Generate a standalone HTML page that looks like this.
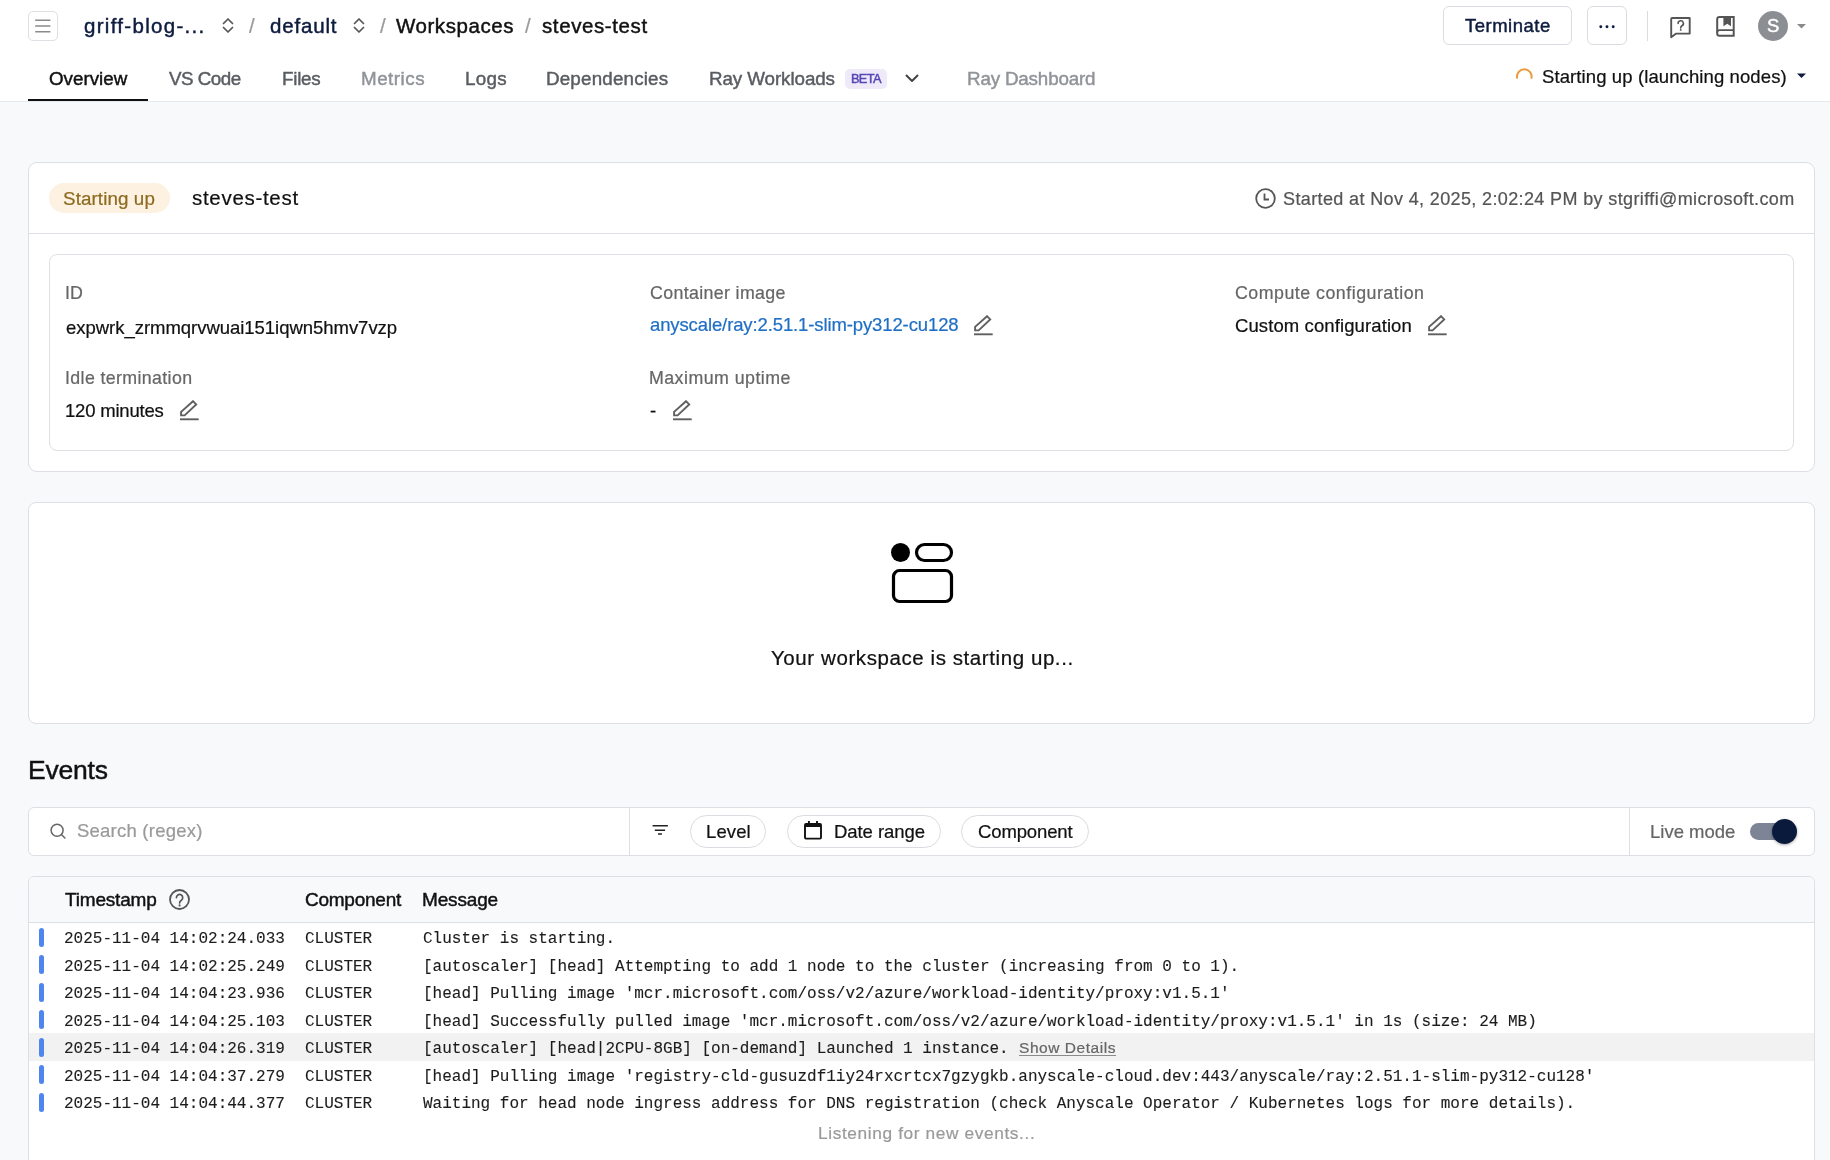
<!DOCTYPE html>
<html><head><meta charset="utf-8"><style>
html,body{margin:0;padding:0;}
body{width:1830px;height:1160px;position:relative;overflow:hidden;background:#f8f9fb;font-family:"Liberation Sans",sans-serif;}
.t{position:absolute;white-space:pre;will-change:transform;}
.r{position:absolute;}
</style></head><body>
<div class="r" style="left:0px;top:0px;width:1830px;height:101px;background:#fff"></div>
<div class="r" style="left:0px;top:101px;width:1830px;height:1px;background:#e6e8ec"></div>
<div class="r" style="left:28px;top:11px;width:30px;height:30px;border:1px solid #dcdfe3;border-radius:5px;box-sizing:border-box;background:#fff"></div>
<svg class="r" style="left:34px;top:18px;" width="18" height="16" viewBox="0 0 18 16"><path d="M1.2 2.2h15.2M1.2 8h15.2M1.2 13.8h15.2" stroke="#8a8a8a" stroke-width="1.6"/></svg>
<div class="t" style="left:84px;top:13.50px;font-size:20.5px;line-height:23px;color:#0d1b3e;font-weight:400;-webkit-text-stroke:0.45px #0d1b3e;letter-spacing:1.308px;font-family:'Liberation Sans', sans-serif;">griff-blog-...</div>
<svg class="r" style="left:220px;top:17px;" width="16" height="17" viewBox="0 0 16 17"><path d="M3.5 6.5 8 2l4.5 4.5M3.5 10.5 8 15l4.5-4.5" fill="none" stroke="#555" stroke-width="1.7" stroke-linecap="round" stroke-linejoin="round"/></svg>
<div class="t" style="left:249px;top:13.50px;font-size:20.5px;line-height:23px;color:#999;font-weight:400;-webkit-text-stroke:0.22px #999;letter-spacing:0.000px;font-family:'Liberation Sans', sans-serif;">/</div>
<div class="t" style="left:270px;top:13.50px;font-size:20.5px;line-height:23px;color:#0d1b3e;font-weight:400;-webkit-text-stroke:0.45px #0d1b3e;letter-spacing:0.833px;font-family:'Liberation Sans', sans-serif;">default</div>
<svg class="r" style="left:351px;top:17px;" width="16" height="17" viewBox="0 0 16 17"><path d="M3.5 6.5 8 2l4.5 4.5M3.5 10.5 8 15l4.5-4.5" fill="none" stroke="#555" stroke-width="1.7" stroke-linecap="round" stroke-linejoin="round"/></svg>
<div class="t" style="left:380px;top:13.50px;font-size:20.5px;line-height:23px;color:#999;font-weight:400;-webkit-text-stroke:0.22px #999;letter-spacing:0.000px;font-family:'Liberation Sans', sans-serif;">/</div>
<div class="t" style="left:396.0px;top:13.50px;font-size:20.5px;line-height:23px;color:#111;font-weight:400;-webkit-text-stroke:0.45px #111;letter-spacing:0.556px;font-family:'Liberation Sans', sans-serif;">Workspaces</div>
<div class="t" style="left:525px;top:13.50px;font-size:20.5px;line-height:23px;color:#999;font-weight:400;-webkit-text-stroke:0.22px #999;letter-spacing:0.000px;font-family:'Liberation Sans', sans-serif;">/</div>
<div class="t" style="left:542px;top:13.50px;font-size:20.5px;line-height:23px;color:#111;font-weight:400;-webkit-text-stroke:0.45px #111;letter-spacing:0.600px;font-family:'Liberation Sans', sans-serif;">steves-test</div>
<div class="r" style="left:1443px;top:6px;width:129px;height:39px;border:1px solid #d9dce1;border-radius:6px;box-sizing:border-box;background:#fff"></div>
<div class="t" style="left:1465px;top:15.00px;font-size:18.5px;line-height:21px;color:#0d1b3e;font-weight:400;-webkit-text-stroke:0.45px #0d1b3e;letter-spacing:0.500px;font-family:'Liberation Sans', sans-serif;">Terminate</div>
<div class="r" style="left:1587px;top:6px;width:40px;height:39px;border:1px solid #d9dce1;border-radius:6px;box-sizing:border-box;background:#fff"></div>
<svg class="r" style="left:1597px;top:22px;" width="20" height="8" viewBox="0 0 20 8"><circle cx="3.8" cy="4.8" r="1.45" fill="#0d1b3e"/><circle cx="10" cy="4.8" r="1.45" fill="#0d1b3e"/><circle cx="16.2" cy="4.8" r="1.45" fill="#0d1b3e"/></svg>
<div class="r" style="left:1647px;top:11px;width:1px;height:30px;background:#d9dce1"></div>
<svg class="r" style="left:1668px;top:15px;" width="25" height="24" viewBox="0 0 25 24"><path d="M4.2 3H21.7V18.6H8.2L3.2 22.2V4Q3.2 3 4.2 3Z" fill="none" stroke="#555" stroke-width="1.9" stroke-linejoin="round"/><path d="M10.1 8.4A2.65 2.65 0 1 1 13.9 10.8C13.1 11.3 12.7 11.8 12.7 13" fill="none" stroke="#555" stroke-width="1.6" stroke-linecap="round"/><circle cx="12.7" cy="14.9" r="0.95" fill="#555"/></svg>
<svg class="r" style="left:1714px;top:14px;" width="24" height="24" viewBox="0 0 24 24"><path d="M5.5 3H19.7V21.7H5.5A2.3 2.3 0 0 1 3.2 19.4V5.3A2.3 2.3 0 0 1 5.5 3Z" fill="none" stroke="#555" stroke-width="2"/><path d="M3.2 18.6A2.3 2.3 0 0 1 5.5 16.2H19.7" fill="none" stroke="#555" stroke-width="1.8"/><path d="M9.4 3H17V12.2L13.2 9.8L9.4 12.2Z" fill="#555"/></svg>
<div class="r" style="left:1758px;top:11px;width:30px;height:30px;background:#8b8f93;border-radius:50%"></div>
<div class="t" style="left:1767.3999999999992px;top:15.00px;font-size:18.5px;line-height:21px;color:#fff;font-weight:400;-webkit-text-stroke:0.45px #fff;letter-spacing:0.000px;font-family:'Liberation Sans', sans-serif;">S</div>
<svg class="r" style="left:1796px;top:23px;" width="11" height="7" viewBox="0 0 11 7"><path d="M1 1h9L5.5 5.5z" fill="#8a8a8a"/></svg>
<div class="t" style="left:48.999999999999915px;top:68.00px;font-size:18.8px;line-height:21px;color:#111;font-weight:400;-webkit-text-stroke:0.45px #111;letter-spacing:0.000px;font-family:'Liberation Sans', sans-serif;">Overview</div>
<div class="r" style="left:28px;top:99px;width:120px;height:2px;background:#111"></div>
<div class="t" style="left:169px;top:68.00px;font-size:18.8px;line-height:21px;color:#595c61;font-weight:400;-webkit-text-stroke:0.45px #595c61;letter-spacing:-0.500px;font-family:'Liberation Sans', sans-serif;">VS Code</div>
<div class="t" style="left:282px;top:68.00px;font-size:18.8px;line-height:21px;color:#595c61;font-weight:400;-webkit-text-stroke:0.45px #595c61;letter-spacing:-0.250px;font-family:'Liberation Sans', sans-serif;">Files</div>
<div class="t" style="left:361px;top:68.00px;font-size:18.8px;line-height:21px;color:#909398;font-weight:400;-webkit-text-stroke:0.45px #909398;letter-spacing:0.500px;font-family:'Liberation Sans', sans-serif;">Metrics</div>
<div class="t" style="left:465px;top:68.00px;font-size:18.8px;line-height:21px;color:#595c61;font-weight:400;-webkit-text-stroke:0.45px #595c61;letter-spacing:0.333px;font-family:'Liberation Sans', sans-serif;">Logs</div>
<div class="t" style="left:546px;top:68.00px;font-size:18.8px;line-height:21px;color:#595c61;font-weight:400;-webkit-text-stroke:0.45px #595c61;letter-spacing:0.182px;font-family:'Liberation Sans', sans-serif;">Dependencies</div>
<div class="t" style="left:708.9999999999986px;top:68.00px;font-size:18.8px;line-height:21px;color:#595c61;font-weight:400;-webkit-text-stroke:0.45px #595c61;letter-spacing:-0.083px;font-family:'Liberation Sans', sans-serif;">Ray Workloads</div>
<div class="r" style="left:845px;top:69px;width:42px;height:20px;background:#eeeafa;border-radius:5px"></div>
<div class="t" style="left:851px;top:71.00px;font-size:12.8px;line-height:15px;color:#5646b5;font-weight:400;-webkit-text-stroke:0.45px #5646b5;letter-spacing:-0.667px;font-family:'Liberation Sans', sans-serif;">BETA</div>
<svg class="r" style="left:903px;top:72px;" width="18" height="12" viewBox="0 0 18 12"><path d="M3.5 3.5l5.5 5.5 5.5-5.5" fill="none" stroke="#444" stroke-width="2" stroke-linecap="round" stroke-linejoin="round"/></svg>
<div class="t" style="left:966.9999999999993px;top:68.00px;font-size:18.8px;line-height:21px;color:#909398;font-weight:400;-webkit-text-stroke:0.45px #909398;letter-spacing:-0.167px;font-family:'Liberation Sans', sans-serif;">Ray Dashboard</div>
<svg class="r" style="left:1514px;top:66px;" width="20" height="16" viewBox="0 0 20 16"><path d="M3.1 11.8A7.3 7.3 0 1 1 17.5 11.8" fill="none" stroke="#e99b3f" stroke-width="2" stroke-linecap="round"/></svg>
<div class="t" style="left:1542px;top:66.00px;font-size:18.5px;line-height:21px;color:#111;font-weight:400;-webkit-text-stroke:0.22px #111;letter-spacing:0.107px;font-family:'Liberation Sans', sans-serif;">Starting up (launching nodes)</div>
<svg class="r" style="left:1796px;top:72px;" width="11" height="7" viewBox="0 0 11 7"><path d="M1 1.5h9L5.5 6z" fill="#0d1b3e"/></svg>
<div class="r" style="left:0px;top:102px;width:1830px;height:1058px;background:#f8f9fb"></div>
<div class="r" style="left:28px;top:162px;width:1787px;height:310px;background:#fff;border:1px solid #dddfe4;border-radius:9px;box-sizing:border-box"></div>
<div class="r" style="left:29px;top:233px;width:1785px;height:1px;background:#dddfe4"></div>
<div class="r" style="left:49px;top:183px;width:121px;height:30px;background:#fdf1e1;border-radius:15px"></div>
<div class="t" style="left:63.0px;top:188.00px;font-size:18.8px;line-height:21px;color:#8d6a1f;font-weight:400;-webkit-text-stroke:0.22px #8d6a1f;letter-spacing:0.100px;font-family:'Liberation Sans', sans-serif;">Starting up</div>
<div class="t" style="left:192.00000000000034px;top:186.00px;font-size:20.5px;line-height:23px;color:#111;font-weight:400;-webkit-text-stroke:0.22px #111;letter-spacing:0.700px;font-family:'Liberation Sans', sans-serif;">steves-test</div>
<svg class="r" style="left:1254px;top:187px;" width="23" height="23" viewBox="0 0 23 23"><circle cx="11.5" cy="11.5" r="9.3" fill="none" stroke="#555" stroke-width="1.8"/><path d="M10.5 6.5v6h4.5" fill="none" stroke="#555" stroke-width="1.8"/></svg>
<div class="t" style="left:1282.9999999999986px;top:189.00px;font-size:18px;line-height:20px;color:#555;font-weight:400;-webkit-text-stroke:0.22px #555;letter-spacing:0.373px;font-family:'Liberation Sans', sans-serif;">Started at Nov 4, 2025, 2:02:24 PM by stgriffi@microsoft.com</div>
<div class="r" style="left:49px;top:254px;width:1745px;height:197px;background:#fff;border:1px solid #dddfe4;border-radius:8px;box-sizing:border-box"></div>
<div class="t" style="left:65.19999999999993px;top:283.00px;font-size:17.8px;line-height:20px;color:#666;font-weight:400;-webkit-text-stroke:0.22px #666;letter-spacing:0.000px;font-family:'Liberation Sans', sans-serif;">ID</div>
<div class="t" style="left:65.99999999999991px;top:316.80px;font-size:18.5px;line-height:21px;color:#111;font-weight:400;-webkit-text-stroke:0.22px #111;letter-spacing:-0.031px;font-family:'Liberation Sans', sans-serif;">expwrk_zrmmqrvwuai151iqwn5hmv7vzp</div>
<div class="t" style="left:649.9999999999986px;top:282.60px;font-size:17.8px;line-height:20px;color:#666;font-weight:400;-webkit-text-stroke:0.22px #666;letter-spacing:0.357px;font-family:'Liberation Sans', sans-serif;">Container image</div>
<div class="t" style="left:649.9999999999986px;top:314.00px;font-size:18.5px;line-height:21px;color:#1f6fc5;font-weight:400;-webkit-text-stroke:0.22px #1f6fc5;letter-spacing:-0.114px;font-family:'Liberation Sans', sans-serif;">anyscale/ray:2.51.1-slim-py312-cu128</div>
<div class="t" style="left:1235.0000000000014px;top:283.00px;font-size:17.8px;line-height:20px;color:#666;font-weight:400;-webkit-text-stroke:0.22px #666;letter-spacing:0.500px;font-family:'Liberation Sans', sans-serif;">Compute configuration</div>
<div class="t" style="left:1235.0000000000014px;top:315.00px;font-size:18.5px;line-height:21px;color:#111;font-weight:400;-webkit-text-stroke:0.22px #111;letter-spacing:0.105px;font-family:'Liberation Sans', sans-serif;">Custom configuration</div>
<div class="t" style="left:65px;top:367.70px;font-size:17.8px;line-height:20px;color:#666;font-weight:400;-webkit-text-stroke:0.22px #666;letter-spacing:0.367px;font-family:'Liberation Sans', sans-serif;">Idle termination</div>
<div class="t" style="left:65.00000000000009px;top:399.90px;font-size:18.5px;line-height:21px;color:#111;font-weight:400;-webkit-text-stroke:0.22px #111;letter-spacing:-0.200px;font-family:'Liberation Sans', sans-serif;">120 minutes</div>
<div class="t" style="left:648.9999999999986px;top:367.80px;font-size:17.8px;line-height:20px;color:#666;font-weight:400;-webkit-text-stroke:0.22px #666;letter-spacing:0.462px;font-family:'Liberation Sans', sans-serif;">Maximum uptime</div>
<div class="t" style="left:649.9999999999986px;top:400.00px;font-size:18.5px;line-height:21px;color:#111;font-weight:400;-webkit-text-stroke:0.22px #111;letter-spacing:0.000px;font-family:'Liberation Sans', sans-serif;">-</div>
<svg class="r" style="left:180px;top:400.4px;" width="20" height="21" viewBox="0 0 20 21"><path d="M13 1.2 16.2 4.4 4.6 15.4H1.1V11.9z" fill="none" stroke="#5f5f5f" stroke-width="1.9" stroke-linejoin="miter"/><path d="M0 19.3h18.7" stroke="#5f5f5f" stroke-width="1.9"/></svg>
<svg class="r" style="left:673px;top:400.4px;" width="20" height="21" viewBox="0 0 20 21"><path d="M13 1.2 16.2 4.4 4.6 15.4H1.1V11.9z" fill="none" stroke="#5f5f5f" stroke-width="1.9" stroke-linejoin="miter"/><path d="M0 19.3h18.7" stroke="#5f5f5f" stroke-width="1.9"/></svg>
<svg class="r" style="left:974px;top:315.3px;" width="20" height="21" viewBox="0 0 20 21"><path d="M13 1.2 16.2 4.4 4.6 15.4H1.1V11.9z" fill="none" stroke="#5f5f5f" stroke-width="1.9" stroke-linejoin="miter"/><path d="M0 19.3h18.7" stroke="#5f5f5f" stroke-width="1.9"/></svg>
<svg class="r" style="left:1428px;top:315.4px;" width="20" height="21" viewBox="0 0 20 21"><path d="M13 1.2 16.2 4.4 4.6 15.4H1.1V11.9z" fill="none" stroke="#5f5f5f" stroke-width="1.9" stroke-linejoin="miter"/><path d="M0 19.3h18.7" stroke="#5f5f5f" stroke-width="1.9"/></svg>
<div class="r" style="left:28px;top:502px;width:1787px;height:222px;background:#fff;border:1px solid #dddfe4;border-radius:8px;box-sizing:border-box"></div>
<svg class="r" style="left:890px;top:541px;" width="65" height="64" viewBox="0 0 65 64"><circle cx="10.5" cy="11.5" r="9.5" fill="#000"/><rect x="26.5" y="3.5" width="35" height="16" rx="8" fill="none" stroke="#000" stroke-width="3.2"/><rect x="3.5" y="29.5" width="58" height="31" rx="6" fill="none" stroke="#000" stroke-width="3.2"/></svg>
<div class="t" style="left:771.0px;top:646.00px;font-size:20.5px;line-height:23px;color:#111;font-weight:400;-webkit-text-stroke:0.22px #111;letter-spacing:0.581px;font-family:'Liberation Sans', sans-serif;">Your workspace is starting up...</div>
<div class="t" style="left:27.60000000000003px;top:755.00px;font-size:26.5px;line-height:30px;color:#111;font-weight:400;-webkit-text-stroke:0.45px #111;letter-spacing:-0.220px;font-family:'Liberation Sans', sans-serif;">Events</div>
<div class="r" style="left:28px;top:807px;width:1787px;height:49px;background:#fff;border:1px solid #dddfe4;border-radius:6px;box-sizing:border-box"></div>
<div class="r" style="left:629px;top:808px;width:1px;height:47px;background:#dddfe4"></div>
<div class="r" style="left:1629px;top:808px;width:1px;height:47px;background:#dddfe4"></div>
<svg class="r" style="left:48px;top:821px;" width="20" height="20" viewBox="0 0 20 20"><circle cx="9.1" cy="9.2" r="6" fill="none" stroke="#666" stroke-width="1.5"/><path d="M13.4 13.5 16.9 17" stroke="#666" stroke-width="1.5" stroke-linecap="round"/></svg>
<div class="t" style="left:77px;top:820.20px;font-size:18.5px;line-height:21px;color:#9a9a9a;font-weight:400;-webkit-text-stroke:0.22px #9a9a9a;letter-spacing:0.231px;font-family:'Liberation Sans', sans-serif;">Search (regex)</div>
<svg class="r" style="left:650px;top:822px;" width="20" height="16" viewBox="0 0 20 16"><path d="M2.6 3.8h15.3M4.8 8.2h10.3M8 12h3.9" stroke="#222" stroke-width="1.5"/></svg>
<div class="r" style="left:690px;top:815px;width:76px;height:33px;border:1px solid #d9dce1;border-radius:17px;box-sizing:border-box;background:#fff"></div>
<div class="r" style="left:787px;top:815px;width:154px;height:33px;border:1px solid #d9dce1;border-radius:17px;box-sizing:border-box;background:#fff"></div>
<div class="r" style="left:961px;top:815px;width:128px;height:33px;border:1px solid #d9dce1;border-radius:17px;box-sizing:border-box;background:#fff"></div>
<div class="t" style="left:705.6000000000005px;top:821.00px;font-size:18.5px;line-height:21px;color:#111;font-weight:400;-webkit-text-stroke:0.22px #111;letter-spacing:0.100px;font-family:'Liberation Sans', sans-serif;">Level</div>
<svg class="r" style="left:802px;top:820px;" width="22" height="22" viewBox="0 0 22 22"><rect x="3" y="4" width="16" height="14.6" rx="1" fill="none" stroke="#111" stroke-width="1.9"/><path d="M3 5.5h16" stroke="#111" stroke-width="3"/><path d="M6.9 1v4M15 1v4" stroke="#111" stroke-width="1.9"/></svg>
<div class="t" style="left:834px;top:821.00px;font-size:18.5px;line-height:21px;color:#111;font-weight:400;-webkit-text-stroke:0.22px #111;letter-spacing:-0.067px;font-family:'Liberation Sans', sans-serif;">Date range</div>
<div class="t" style="left:978px;top:821.00px;font-size:18.5px;line-height:21px;color:#111;font-weight:400;-webkit-text-stroke:0.22px #111;letter-spacing:-0.125px;font-family:'Liberation Sans', sans-serif;">Component</div>
<div class="t" style="left:1649.9999999999973px;top:821.30px;font-size:18.5px;line-height:21px;color:#666;font-weight:400;-webkit-text-stroke:0.22px #666;letter-spacing:0.000px;font-family:'Liberation Sans', sans-serif;">Live mode</div>
<div class="r" style="left:1750px;top:823px;width:40px;height:17px;background:#7d8496;border-radius:9px"></div>
<div class="r" style="left:1772px;top:819px;width:25px;height:25px;background:#0a1a3c;border-radius:50%;box-shadow:0 1px 3px rgba(0,0,0,.35)"></div>
<div class="r" style="left:28px;top:876px;width:1787px;height:300px;background:#fff;border:1px solid #dddfe4;border-radius:6px;box-sizing:border-box"></div>
<div class="r" style="left:29px;top:877px;width:1785px;height:46px;background:#f8f9fb;border-radius:5px 5px 0 0"></div>
<div class="r" style="left:29px;top:922px;width:1785px;height:1px;background:#dddfe4"></div>
<div class="t" style="left:65px;top:889.00px;font-size:19px;line-height:21px;color:#111;font-weight:400;-webkit-text-stroke:0.45px #111;letter-spacing:-0.188px;font-family:'Liberation Sans', sans-serif;">Timestamp</div>
<svg class="r" style="left:168px;top:888px;" width="23" height="23" viewBox="0 0 23 23"><circle cx="11.5" cy="11.5" r="9.5" fill="none" stroke="#555" stroke-width="1.8"/><path d="M8.4 9.6A3.15 3.15 0 1 1 13.4 12.2C12.2 12.9 11.6 13.4 11.6 15" fill="none" stroke="#555" stroke-width="1.7" stroke-linecap="round"/><circle cx="11.6" cy="17.4" r="1.05" fill="#555"/></svg>
<div class="t" style="left:305px;top:889.00px;font-size:19px;line-height:21px;color:#111;font-weight:400;-webkit-text-stroke:0.45px #111;letter-spacing:-0.250px;font-family:'Liberation Sans', sans-serif;">Component</div>
<div class="t" style="left:422px;top:889.00px;font-size:19px;line-height:21px;color:#111;font-weight:400;-webkit-text-stroke:0.45px #111;letter-spacing:-0.167px;font-family:'Liberation Sans', sans-serif;">Message</div>
<div class="r" style="left:39px;top:927.5px;width:5px;height:19px;background:#4f86ee;border-radius:3px"></div>
<div class="t" style="left:64px;top:930.00px;font-size:16px;line-height:18px;color:#1c1c1c;font-weight:400;-webkit-text-stroke:0.12px #1c1c1c;letter-spacing:0.000px;font-family:'Liberation Mono', monospace;">2025-11-04 14:02:24.033</div>
<div class="t" style="left:305px;top:930.00px;font-size:16px;line-height:18px;color:#1c1c1c;font-weight:400;-webkit-text-stroke:0.12px #1c1c1c;letter-spacing:0.000px;font-family:'Liberation Mono', monospace;">CLUSTER</div>
<div class="t" style="left:423px;top:930.00px;font-size:16px;line-height:18px;color:#1c1c1c;font-weight:400;-webkit-text-stroke:0.12px #1c1c1c;letter-spacing:0.000px;font-family:'Liberation Mono', monospace;">Cluster is starting.</div>
<div class="r" style="left:39px;top:955.0px;width:5px;height:19px;background:#4f86ee;border-radius:3px"></div>
<div class="t" style="left:64px;top:957.50px;font-size:16px;line-height:18px;color:#1c1c1c;font-weight:400;-webkit-text-stroke:0.12px #1c1c1c;letter-spacing:0.000px;font-family:'Liberation Mono', monospace;">2025-11-04 14:02:25.249</div>
<div class="t" style="left:305px;top:957.50px;font-size:16px;line-height:18px;color:#1c1c1c;font-weight:400;-webkit-text-stroke:0.12px #1c1c1c;letter-spacing:0.000px;font-family:'Liberation Mono', monospace;">CLUSTER</div>
<div class="t" style="left:423px;top:957.50px;font-size:16px;line-height:18px;color:#1c1c1c;font-weight:400;-webkit-text-stroke:0.12px #1c1c1c;letter-spacing:0.000px;font-family:'Liberation Mono', monospace;">[autoscaler] [head] Attempting to add 1 node to the cluster (increasing from 0 to 1).</div>
<div class="r" style="left:39px;top:982.5px;width:5px;height:19px;background:#4f86ee;border-radius:3px"></div>
<div class="t" style="left:64px;top:985.00px;font-size:16px;line-height:18px;color:#1c1c1c;font-weight:400;-webkit-text-stroke:0.12px #1c1c1c;letter-spacing:0.000px;font-family:'Liberation Mono', monospace;">2025-11-04 14:04:23.936</div>
<div class="t" style="left:305px;top:985.00px;font-size:16px;line-height:18px;color:#1c1c1c;font-weight:400;-webkit-text-stroke:0.12px #1c1c1c;letter-spacing:0.000px;font-family:'Liberation Mono', monospace;">CLUSTER</div>
<div class="t" style="left:423px;top:985.00px;font-size:16px;line-height:18px;color:#1c1c1c;font-weight:400;-webkit-text-stroke:0.12px #1c1c1c;letter-spacing:0.000px;font-family:'Liberation Mono', monospace;">[head] Pulling image 'mcr.microsoft.com/oss/v2/azure/workload-identity/proxy:v1.5.1'</div>
<div class="r" style="left:39px;top:1010.0px;width:5px;height:19px;background:#4f86ee;border-radius:3px"></div>
<div class="t" style="left:64px;top:1012.50px;font-size:16px;line-height:18px;color:#1c1c1c;font-weight:400;-webkit-text-stroke:0.12px #1c1c1c;letter-spacing:0.000px;font-family:'Liberation Mono', monospace;">2025-11-04 14:04:25.103</div>
<div class="t" style="left:305px;top:1012.50px;font-size:16px;line-height:18px;color:#1c1c1c;font-weight:400;-webkit-text-stroke:0.12px #1c1c1c;letter-spacing:0.000px;font-family:'Liberation Mono', monospace;">CLUSTER</div>
<div class="t" style="left:423px;top:1012.50px;font-size:16px;line-height:18px;color:#1c1c1c;font-weight:400;-webkit-text-stroke:0.12px #1c1c1c;letter-spacing:0.000px;font-family:'Liberation Mono', monospace;">[head] Successfully pulled image 'mcr.microsoft.com/oss/v2/azure/workload-identity/proxy:v1.5.1' in 1s (size: 24 MB)</div>
<div class="r" style="left:29px;top:1033.0px;width:1785px;height:28px;background:#f2f2f3"></div>
<div class="r" style="left:39px;top:1037.5px;width:5px;height:19px;background:#4f86ee;border-radius:3px"></div>
<div class="t" style="left:64px;top:1040.00px;font-size:16px;line-height:18px;color:#1c1c1c;font-weight:400;-webkit-text-stroke:0.12px #1c1c1c;letter-spacing:0.000px;font-family:'Liberation Mono', monospace;">2025-11-04 14:04:26.319</div>
<div class="t" style="left:305px;top:1040.00px;font-size:16px;line-height:18px;color:#1c1c1c;font-weight:400;-webkit-text-stroke:0.12px #1c1c1c;letter-spacing:0.000px;font-family:'Liberation Mono', monospace;">CLUSTER</div>
<div class="t" style="left:423px;top:1040.00px;font-size:16px;line-height:18px;color:#1c1c1c;font-weight:400;-webkit-text-stroke:0.12px #1c1c1c;letter-spacing:0.000px;font-family:'Liberation Mono', monospace;">[autoscaler] [head|2CPU-8GB] [on-demand] Launched 1 instance.</div>
<div class="r" style="left:39px;top:1065.0px;width:5px;height:19px;background:#4f86ee;border-radius:3px"></div>
<div class="t" style="left:64px;top:1067.50px;font-size:16px;line-height:18px;color:#1c1c1c;font-weight:400;-webkit-text-stroke:0.12px #1c1c1c;letter-spacing:0.000px;font-family:'Liberation Mono', monospace;">2025-11-04 14:04:37.279</div>
<div class="t" style="left:305px;top:1067.50px;font-size:16px;line-height:18px;color:#1c1c1c;font-weight:400;-webkit-text-stroke:0.12px #1c1c1c;letter-spacing:0.000px;font-family:'Liberation Mono', monospace;">CLUSTER</div>
<div class="t" style="left:423px;top:1067.50px;font-size:16px;line-height:18px;color:#1c1c1c;font-weight:400;-webkit-text-stroke:0.12px #1c1c1c;letter-spacing:0.000px;font-family:'Liberation Mono', monospace;">[head] Pulling image 'registry-cld-gusuzdf1iy24rxcrtcx7gzygkb.anyscale-cloud.dev:443/anyscale/ray:2.51.1-slim-py312-cu128'</div>
<div class="r" style="left:39px;top:1092.5px;width:5px;height:19px;background:#4f86ee;border-radius:3px"></div>
<div class="t" style="left:64px;top:1095.00px;font-size:16px;line-height:18px;color:#1c1c1c;font-weight:400;-webkit-text-stroke:0.12px #1c1c1c;letter-spacing:0.000px;font-family:'Liberation Mono', monospace;">2025-11-04 14:04:44.377</div>
<div class="t" style="left:305px;top:1095.00px;font-size:16px;line-height:18px;color:#1c1c1c;font-weight:400;-webkit-text-stroke:0.12px #1c1c1c;letter-spacing:0.000px;font-family:'Liberation Mono', monospace;">CLUSTER</div>
<div class="t" style="left:423px;top:1095.00px;font-size:16px;line-height:18px;color:#1c1c1c;font-weight:400;-webkit-text-stroke:0.12px #1c1c1c;letter-spacing:0.000px;font-family:'Liberation Mono', monospace;">Waiting for head node ingress address for DNS registration (check Anyscale Operator / Kubernetes logs for more details).</div>
<div class="t" style="left:1018.9999999999986px;top:1038.50px;font-size:15.5px;line-height:17px;color:#666;font-weight:400;-webkit-text-stroke:0.22px #666;letter-spacing:0.545px;font-family:'Liberation Sans', sans-serif;text-decoration:underline;text-decoration-color:#8a8a8a;text-decoration-thickness:1px;text-underline-offset:2px">Show Details</div>
<div class="t" style="left:818px;top:1122.70px;font-size:17.3px;line-height:20px;color:#9a9a9a;font-weight:400;-webkit-text-stroke:0.22px #9a9a9a;letter-spacing:0.615px;font-family:'Liberation Sans', sans-serif;">Listening for new events...</div>
</body></html>
